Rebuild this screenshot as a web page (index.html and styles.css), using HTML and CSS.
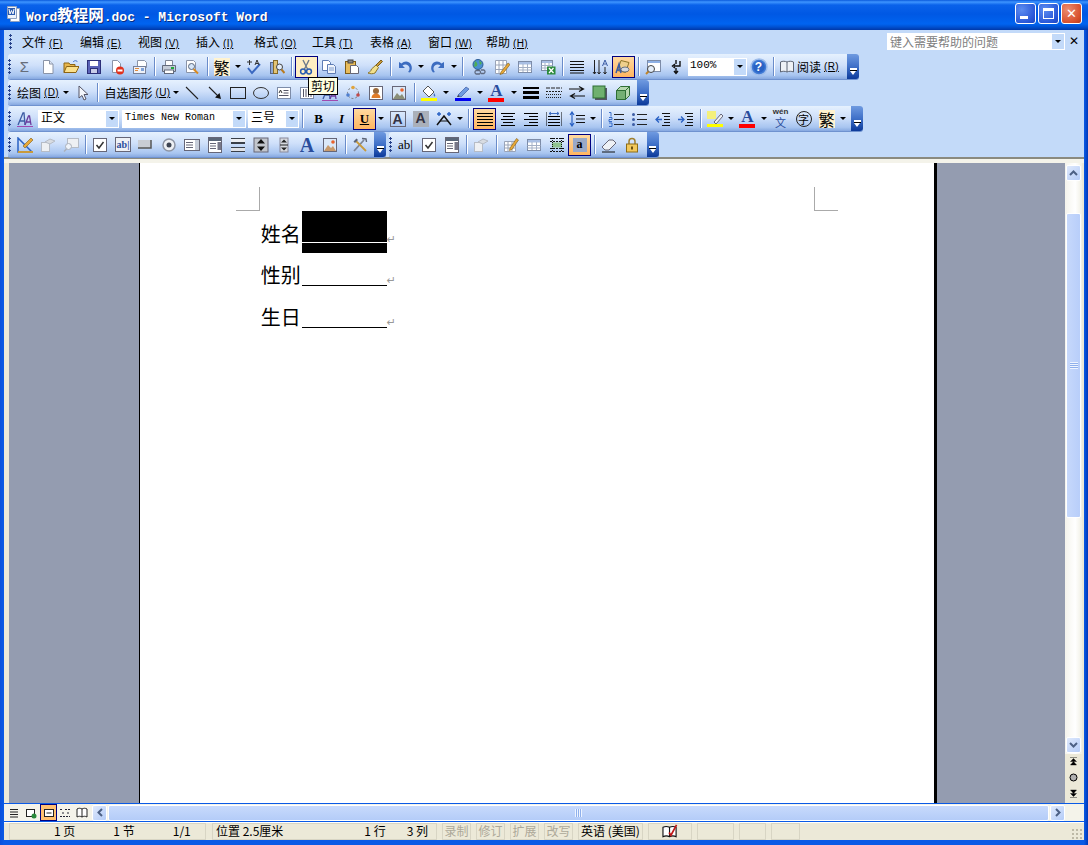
FILE: index.html
```html
<!DOCTYPE html>
<html lang="zh-CN">
<head>
  <meta charset="UTF-8" />
  <title>Word教程网.doc - Microsoft Word</title>
  <link rel="stylesheet" href="styles.css">
</head>
<body>

<svg class="defs" aria-hidden="true">
  <symbol id="new" viewBox="0 0 16 16"><path d="M3.5 1.500h6l3.500 3.500v9.500h-9.500z" fill="#fff" stroke="#8a94a8"/><path d="M9.500 1.500v3.500h3.500" fill="#dde6f5" stroke="#8a94a8"/></symbol>
  <symbol id="open" viewBox="0 0 16 16"><path d="M1 4h5l1 1.500h5v8H1z" fill="#e8b64c" stroke="#8c6414"/><path d="M3.500 7.500H16l-3 6H1z" fill="#fbe08c" stroke="#8c6414"/><path d="M10 3c2-2 3.500-1.500 4.500 0" fill="none" stroke="#3a6ec8"/></symbol>
  <symbol id="save" viewBox="0 0 16 16"><rect x="1.500" y="1.500" width="13" height="13" fill="#5a62b8" stroke="#2c2f78"/><rect x="4" y="2" width="8" height="5" fill="#fff"/><rect x="4.500" y="9.500" width="7" height="5" fill="#c9cde8" stroke="#2c2f78"/></symbol>
  <symbol id="perm" viewBox="0 0 16 16"><path d="M3.500 1.500h5l3 3v9h-8z" fill="#fff" stroke="#8a94a8"/><circle cx="11" cy="11.500" r="4" fill="#e0301c"/><rect x="8.500" y="10.500" width="5" height="2" fill="#fff"/></symbol>
  <symbol id="mail" viewBox="0 0 16 16"><path d="M5.500 1.500h7l2 2v5h-9z" fill="#fff" stroke="#8a94a8"/><rect x="1.500" y="7.500" width="12" height="7" fill="#eef1f8" stroke="#77819a"/><path d="M3 9.500h4M3 11.500h3" stroke="#e08a3c"/><rect x="9" y="9" width="3" height="3" fill="#7fa2d8"/></symbol>
  <symbol id="print" viewBox="0 0 16 16"><path d="M4.500 1.500h7v5h-7z" fill="#fff" stroke="#7d8596"/><path d="M1.500 6.500h13v6h-13z" fill="#c6cdd9" stroke="#626a7c"/><rect x="3.500" y="11" width="9" height="3.500" fill="#fff" stroke="#626a7c"/><rect x="10" y="8" width="3" height="2" fill="#1fa83c"/></symbol>
  <symbol id="preview" viewBox="0 0 16 16"><path d="M2.500 1.500h7l2 2v10h-9z" fill="#fff" stroke="#8a94a8"/><circle cx="7.500" cy="7.500" r="3" fill="#d6e6f8" stroke="#5a667c"/><path d="M9.500 10l4.500 4.500" stroke="#d98a20" stroke-width="2"/></symbol>
  <symbol id="spell" viewBox="0 0 16 16"><path d="M2 9l4 5 8-9" fill="none" stroke="#3a68c0" stroke-width="2"/><path d="M1 3h5M3.500 1v5M9 6l2-5 2 5M10 4.500h2" fill="none" stroke="#333"/></symbol>
  <symbol id="research" viewBox="0 0 16 16"><rect x="1.500" y="3.500" width="3" height="11" fill="#8fa8d4" stroke="#56668c"/><rect x="4.500" y="1.500" width="4" height="13" fill="#e3c474" stroke="#846a28"/><circle cx="10.500" cy="8" r="3" fill="#e4eefa" stroke="#444"/><path d="M12.500 10.500l3 3.500" stroke="#b87a20" stroke-width="2"/></symbol>
  <symbol id="cut" viewBox="0 0 16 16"><path d="M5 1l4.500 9M11 1L6.500 10" stroke="#6d7a8c" stroke-width="1.400"/><circle cx="5" cy="12.500" r="2.400" fill="none" stroke="#2a5cb0" stroke-width="1.500"/><circle cx="11" cy="12.500" r="2.400" fill="none" stroke="#2a5cb0" stroke-width="1.500"/></symbol>
  <symbol id="copy" viewBox="0 0 16 16"><path d="M1.500 1.500h6l2 2v8h-8z" fill="#fff" stroke="#5e7cb4"/><path d="M6.500 5.500h6l2 2v7h-8z" fill="#eef3fb" stroke="#5e7cb4"/><path d="M8 9h5M8 11h5" stroke="#7f9ccc"/></symbol>
  <symbol id="paste" viewBox="0 0 16 16"><rect x="1.500" y="2.500" width="10" height="12" fill="#e8bc5c" stroke="#7c5c18"/><rect x="4" y="1" width="5" height="3" fill="#888" stroke="#444"/><path d="M6.500 6.500h6l2 2v6h-8z" fill="#fff" stroke="#667"/></symbol>
  <symbol id="brush" viewBox="0 0 16 16"><path d="M9 6l5-5 1.500 1.500-5 5z" fill="#c89a3c" stroke="#7c5c18"/><path d="M9 6l2.500 2.500L8 14c-2 1-5 1-7 0 2-1 3-2 3.500-4z" fill="#f2e08c" stroke="#8c7428"/></symbol>
  <symbol id="undo" viewBox="0 0 16 16"><path d="M2 3v6h6L5.500 6.500C8 4.500 12 5.500 12.500 9c.2 1.500-.5 3-1.500 4l2 .5c2-2 2.500-5 1-8C11.500 1.500 7 2 4.500 4.500z" fill="#3c6cc0"/></symbol>
  <symbol id="redo" viewBox="0 0 16 16"><path d="M14 3v6H8l2.500-2.500C8 4.500 4 5.500 3.500 9c-.2 1.500.5 3 1.500 4l-2 .5c-2-2-2.500-5-1-8C4.500 1.500 9 2 11.500 4.500z" fill="#3c6cc0"/></symbol>
  <symbol id="link" viewBox="0 0 16 16"><circle cx="7" cy="5.500" r="5" fill="#4a90d0" stroke="#2c5c94"/><path d="M4 2c2 1 3 3 2 5l-3 1M8 1l3 3-2 2" fill="#4fae54"/><path d="M5 11.500h3.500a2 2 0 0 1 0 3.500H5a2 2 0 0 1 0-3.500zM10 11h3a2 2 0 0 1 0 3.500h-3" fill="none" stroke="#5f6a80" stroke-width="1.300"/></symbol>
  <symbol id="tblpen" viewBox="0 0 16 16"><path d="M1.500 1.500h11v13h-11zM1.500 6h11M1.500 10.500h11M5 1.500v13M9 1.500v13" fill="#fff" stroke="#9aa4b8"/><path d="M7 13l7-9 2 1.500-7 9-3 1z" fill="#e8a838" stroke="#7c5c18" stroke-width=".6"/></symbol>
  <symbol id="table" viewBox="0 0 16 16"><rect x="1.500" y="2.500" width="13" height="11" fill="#fff" stroke="#7d8ca8"/><rect x="2" y="3" width="12" height="2.500" fill="#a9bfe4"/><path d="M1.500 8.500h13M1.500 11h13M6 5v8M10.500 5v8" stroke="#a5b1c6"/></symbol>
  <symbol id="excel" viewBox="0 0 16 16"><rect x="1.500" y="1.500" width="11" height="10" fill="#fff" stroke="#7d8ca8"/><rect x="2" y="2" width="10" height="2" fill="#a9bfe4"/><path d="M1.500 6.500h11M1.500 9h11M5 4v7M9 4v7" stroke="#a5b1c6"/><rect x="7" y="7.500" width="8.500" height="8" fill="#2a8a3c"/><path d="M9 9l4.500 5M13.500 9L9 14" stroke="#fff" stroke-width="1.300"/></symbol>
  <symbol id="cols" viewBox="0 0 16 16"><path d="M1 2.500h14M1 5.500h14M1 8.500h14M1 11.500h14M1 14h14" stroke="#111" stroke-width="1.200"/></symbol>
  <symbol id="draw" viewBox="0 0 16 16"><path d="M2.500 1v14M1 13l1.500 2L4 13M7 1v14M5.500 13L7 15l1.500-2M13 8v7M11.500 13l1.500 2 1.500-2" fill="none" stroke="#222"/><path d="M10.500 7l2.500-6 2.500 6M11.500 5h3" fill="none" stroke="#3c5ca4"/></symbol>
  <symbol id="docmap" viewBox="0 0 16 16"><path d="M6 1.500l8 2-3.500 10-8-2z" fill="#eecf8c" stroke="#8c7428"/><path d="M1 14l3-9 2 9M2.500 11h3" fill="none" stroke="#3c5ca4" stroke-width="1.500"/><ellipse cx="10" cy="10.500" rx="4" ry="2.500" fill="#d5d9e0" stroke="#6b7280"/></symbol>
  <symbol id="zoomdoc" viewBox="0 0 16 16"><rect x="2.500" y="1.500" width="13" height="11" fill="#fff" stroke="#7d8ca8"/><rect x="3" y="2" width="12" height="2" fill="#8eb0e4"/><circle cx="6" cy="10" r="3.500" fill="#e4eefa" stroke="#444"/><path d="M3.500 12.500L1 15" stroke="#c08428" stroke-width="2"/></symbol>
  <symbol id="pilcrow" viewBox="0 0 16 16"><path d="M12 2v5H6M7 5L4.500 7 7 9M8 9v5M6 12l2 2.500 2-2.500M8 1v4" fill="none" stroke="#111" stroke-width="1.400"/></symbol>
  <symbol id="help" viewBox="0 0 18 18"><circle cx="9" cy="9" r="8" fill="#3f7ad6" stroke="#9fbdea" stroke-width="1.500"/><circle cx="9" cy="9" r="5.800" fill="#2a62c4"/></symbol>
  <symbol id="book" viewBox="0 0 16 16"><path d="M1.500 3c2-1 4.500-1 6.500 0 2-1 4.500-1 6.500 0v10c-2-1-4.500-1-6.500 0-2-1-4.500-1-6.500 0zM8 3v10" fill="#eef1f6" stroke="#5c6474"/></symbol>
  <symbol id="pointer" viewBox="0 0 16 16"><path d="M4 1v12l3-2.500 2 4.500 2-1-2-4.500h4z" fill="#f4f7fc" stroke="#556"/></symbol>
  <symbol id="line" viewBox="0 0 16 16"><path d="M2 2l12 12" stroke="#222" stroke-width="1.100"/></symbol>
  <symbol id="arrow" viewBox="0 0 16 16"><path d="M2 2l9 9" stroke="#222" stroke-width="1.100"/><path d="M14 14l-6-1.500L12.500 8z" fill="#111"/></symbol>
  <symbol id="rect" viewBox="0 0 16 16"><rect x=".5" y="2.500" width="15" height="11" fill="none" stroke="#222"/></symbol>
  <symbol id="oval" viewBox="0 0 16 16"><ellipse cx="8" cy="8" rx="7.500" ry="5.500" fill="none" stroke="#333"/></symbol>
  <symbol id="textbox" viewBox="0 0 16 16"><rect x="1.500" y="2.500" width="13" height="11" fill="#fff" stroke="#7d8ca8"/><path d="M7.500 5.500h5M7.500 8h5M3 10.500h9.500" stroke="#556"/><path d="M3 8l1.500-3L6 8" fill="none" stroke="#333"/></symbol>
  <symbol id="vtext" viewBox="0 0 16 16"><rect x="1.500" y="2.500" width="13" height="11" fill="#fff" stroke="#7d8ca8"/><path d="M4.500 4v8M7 4v8M9.500 4v8M12 4v8" stroke="#556"/></symbol>
  <symbol id="diagram" viewBox="0 0 16 16"><circle cx="8" cy="8" r="5.500" fill="none" stroke="#777" stroke-dasharray="2 2"/><circle cx="8" cy="2.500" r="1.800" fill="#e0a43c"/><circle cx="13" cy="10" r="1.800" fill="#c04a4a"/><circle cx="3" cy="10" r="1.800" fill="#4f7fd0"/></symbol>
  <symbol id="clipart" viewBox="0 0 16 16"><rect x="1.500" y="1.500" width="13" height="13" fill="#fff" stroke="#667"/><circle cx="8" cy="6" r="3" fill="#9a6a3c"/><path d="M3.500 13c0-3 2-4.500 4.500-4.500s4.500 1.500 4.500 4.500z" fill="#e07c28"/></symbol>
  <symbol id="pic" viewBox="0 0 16 16"><rect x="1.500" y="1.500" width="13" height="13" fill="#dbe8f8" stroke="#667"/><circle cx="11" cy="5" r="1.800" fill="#e8622c"/><path d="M2 14l4-6 3 3 2-2 3 5z" fill="#8a8f78"/></symbol>
  <symbol id="fill" viewBox="0 0 16 16"><path d="M7 1l6 6-5 5-6-6z" fill="#fff" stroke="#555"/><path d="M13 8c1.500 2 1.500 3 .8 3.500-.8.400-1.500-1-.8-3.500" fill="#3c6cc0"/><rect y="13" width="16" height="3" fill="#ffff00"/></symbol>
  <symbol id="pen" viewBox="0 0 16 16"><path d="M3 10l8-8 3 2-8 8z" fill="#6f9ae0" stroke="#3c5ca4" stroke-width=".7"/><path d="M3 10l-1 2 3-.2z" fill="#333"/><rect y="13" width="16" height="3" fill="#0000f0"/></symbol>
  <symbol id="lstyle" viewBox="0 0 16 16"><rect y="2" width="16" height="2" fill="#000"/><rect y="6" width="16" height="3" fill="#000"/><rect y="11" width="16" height="3" fill="#000"/></symbol>
  <symbol id="dash" viewBox="0 0 16 16"><path d="M0 3h16" stroke="#222" stroke-dasharray="4 1"/><path d="M0 6.500h16" stroke="#222" stroke-dasharray="2 1"/><path d="M0 9.500h16M0 12.500h16" stroke="#222" stroke-dasharray="1 1"/></symbol>
  <symbol id="arrows" viewBox="0 0 16 16"><path d="M0 4h14M10 1.500L14.500 4 10 6.500M16 11H2M6 8.500L1.500 11 6 13.500" fill="none" stroke="#111" stroke-width="1.200"/></symbol>
  <symbol id="shadow" viewBox="0 0 16 16"><rect x="3" y="3" width="12" height="12" fill="#556"/><rect x="1" y="1" width="12" height="12" fill="#6fb06f" stroke="#2e6e34"/></symbol>
  <symbol id="cube" viewBox="0 0 16 16"><path d="M1.500 5.500h9v9h-9z" fill="#74b074" stroke="#2e6e34"/><path d="M1.500 5.500l4-4h9l-4 4zM10.500 5.500l4-4v9l-4 4z" fill="#b6d8b0" stroke="#2e6e34"/></symbol>
  <symbol id="styles" viewBox="0 0 16 16"><path d="M1 14L6 2h1l1 12M3 10h5" fill="none" stroke="#3c5ca4" stroke-width="1.300"/><path d="M8 14l3.500-9h1l1.500 9M9.500 11H14" fill="none" stroke="#6a3c9c" stroke-width="1.300"/><path d="M0 15.500h16" stroke="#a04ab0"/></symbol>
  <symbol id="phon" viewBox="0 0 16 16"><path d="M1 14L8 5l7 9" fill="none" stroke="#111" stroke-width="1.500"/><path d="M4 10h8" stroke="#111"/><path d="M3 1v4M1 3h4M13 1v4M11 3h4" stroke="#2a62c4" stroke-width="1.400"/></symbol>
  <symbol id="just" viewBox="0 0 16 16"><path d="M0 2.500h16M0 5.500h16M0 8.500h16M0 11.500h16M0 14.500h16" stroke="#000"/></symbol>
  <symbol id="center" viewBox="0 0 16 16"><path d="M1 2.500h14M3 5.500h10M1 8.500h14M3 11.500h10M1 14.500h14" stroke="#000"/></symbol>
  <symbol id="right" viewBox="0 0 16 16"><path d="M1 2.500h14M6 5.500h9M1 8.500h14M6 11.500h9M1 14.500h14" stroke="#000"/></symbol>
  <symbol id="dist" viewBox="0 0 16 16"><path d="M0 1v14M16 1v14M2 5.500h12M2 8.500h12M2 11.500h12M2 14.500h12" stroke="#000"/><path d="M3 2.500h10M3 2.500l2-1.500M3 2.500L5 4M13 2.500L11 1M13 2.500L11 4" fill="none" stroke="#3c6cc0"/></symbol>
  <symbol id="spacing" viewBox="0 0 16 16"><path d="M3 2v12M1 4l2-3 2 3M1 12l2 3 2-3" fill="none" stroke="#2a62c4" stroke-width="1.200"/><path d="M7 4.500h9M7 8h9M7 11.500h9" stroke="#111"/></symbol>
  <symbol id="nums" viewBox="0 0 16 16"><path d="M6 3.500h10M6 8.500h10M6 13.500h10" stroke="#222"/><path d="M1 1.500h2v4M1 6.500h3v2H1v2h3M1 12h3v3.500H1" fill="none" stroke="#2a62c4" stroke-width=".9"/></symbol>
  <symbol id="bullets" viewBox="0 0 16 16"><path d="M6 3.500h10M6 8.500h10M6 13.500h10" stroke="#222"/><circle cx="2.500" cy="3.500" r="1.500" fill="#3c5ca4"/><circle cx="2.500" cy="8.500" r="1.500" fill="#3c5ca4"/><circle cx="2.500" cy="13.500" r="1.500" fill="#3c5ca4"/></symbol>
  <symbol id="outdent" viewBox="0 0 16 16"><path d="M8 2.500h8M10 5.500h6M10 8.500h6M10 11.500h6M8 14.500h8" stroke="#111"/><path d="M8 8.500H2M5 5.500l-3 3 3 3" fill="none" stroke="#2a62c4" stroke-width="1.300"/></symbol>
  <symbol id="indent" viewBox="0 0 16 16"><path d="M8 2.500h8M10 5.500h6M10 8.500h6M10 11.500h6M8 14.500h8" stroke="#111"/><path d="M1 8.500h6M4 5.500l3 3-3 3" fill="none" stroke="#2a62c4" stroke-width="1.300"/></symbol>
  <symbol id="hilite" viewBox="0 0 16 16"><rect width="9" height="8" fill="#f4f07c"/><path d="M7 11l7-8 2 2-7 8z" fill="#eef1f6" stroke="#667"/><rect y="13" width="16" height="3" fill="#ffff00"/></symbol>
  <symbol id="design" viewBox="0 0 16 16"><path d="M1 1v14h14z" fill="none" stroke="#2a62c4" stroke-width="1.500"/><path d="M6 9l8-8 2 2-8 8z" fill="#e8a838" stroke="#7c5c18" stroke-width=".6"/><path d="M1 15h15" stroke="#c89a3c" stroke-width="2"/></symbol>
  <symbol id="dprops" viewBox="0 0 16 16"><rect x="1.500" y="5.500" width="8" height="9" fill="#eef0f3" stroke="#b6bcc6"/><path d="M5 5l5-3 5 2-5 3z" fill="#d8dce2" stroke="#b6bcc6"/></symbol>
  <symbol id="dview" viewBox="0 0 16 16"><rect x="4.500" y="1.500" width="11" height="9" fill="#eef0f3" stroke="#b6bcc6"/><circle cx="5.500" cy="9.500" r="3" fill="#eef3fa" stroke="#aab0ba"/><path d="M3.500 12L1 14.500" stroke="#aab0ba" stroke-width="1.500"/></symbol>
  <symbol id="check" viewBox="0 0 16 16"><rect x="1.500" y="1.500" width="13" height="13" fill="#fff" stroke="#667"/><path d="M4.500 8l2.500 3 4.500-6" fill="none" stroke="#333" stroke-width="1.500"/></symbol>
  <symbol id="btnf" viewBox="0 0 16 16"><rect y="3" width="13" height="8" fill="#c8ccd4"/><path d="M0 11h13V3" fill="none" stroke="#555" stroke-width="1.500"/></symbol>
  <symbol id="radio" viewBox="0 0 16 16"><circle cx="8" cy="8" r="6" fill="#eef0f4" stroke="#8d94a3" stroke-width="1.500"/><circle cx="8" cy="8" r="2.500" fill="#3d4452"/></symbol>
  <symbol id="listf" viewBox="0 0 16 16"><rect x=".5" y="2.500" width="15" height="11" fill="#fff" stroke="#667"/><path d="M2 5.500h7M2 8h7M2 10.500h7" stroke="#667"/><rect x="11" y="3" width="4" height="10" fill="#c6cdd9"/></symbol>
  <symbol id="combof" viewBox="0 0 16 16"><rect x="1.500" y=".5" width="13" height="15" fill="#fff" stroke="#667"/><rect x="2" y="1" width="12" height="3" fill="#5a6678"/><path d="M3 6.500h6M3 9h6M3 11.500h6" stroke="#667"/><rect x="10.500" y="5" width="3.500" height="8" fill="#778"/></symbol>
  <symbol id="frame" viewBox="0 0 16 16"><rect x="1" y="1" width="14" height="6" fill="#3a3f48"/><rect x="1" y="2" width="14" height="3" fill="#eceef2"/><rect x="1" y="10" width="14" height="5" fill="#3a3f48"/><rect x="1" y="11" width="14" height="3" fill="#dfe2e8"/></symbol>
  <symbol id="spin" viewBox="0 0 16 16"><rect x="1" y="1" width="14" height="14" fill="#c2c6cd" stroke="#667"/><path d="M8 2l4 4.500H4zM8 14l4-4.500H4z" fill="#111"/></symbol>
  <symbol id="scrf" viewBox="0 0 16 16"><rect x="4" y="1" width="8" height="14" fill="#d6d9df" stroke="#889"/><path d="M8 2.500l3 3H5zM8 13.500l3-3H5z" fill="#222"/><path d="M4 8h8" stroke="#222"/></symbol>
  <symbol id="imgf" viewBox="0 0 16 16"><rect x="1.500" y="1.500" width="13" height="13" fill="#dbe8f8" stroke="#667"/><circle cx="11" cy="5" r="1.800" fill="#e8622c"/><path d="M2 14l4-6 3 3 2-2 3 5z" fill="#c89a6c"/></symbol>
  <symbol id="tools" viewBox="0 0 16 16"><path d="M2 14L12 3" stroke="#7d8596" stroke-width="1.800"/><path d="M10 1.500l4 .5.500 3" fill="none" stroke="#5d6576" stroke-width="1.400"/><path d="M14 14L4 4" stroke="#c89a3c" stroke-width="1.800"/><path d="M1.500 4.500l3-3 1.500 1.500-3 3z" fill="#5d6576"/></symbol>
  <symbol id="form" viewBox="0 0 16 16"><path d="M1.500 4.500h11v10h-11zM1.500 8h11M1.500 11h11M5 4.500v10M9 4.500v10" fill="#fff" stroke="#9aa4b8"/><path d="M7 11l6.500-9.500 2 1.500-6.500 9.500-2.500 1z" fill="#e8a838" stroke="#7c5c18" stroke-width=".6"/></symbol>
  <symbol id="tgrid" viewBox="0 0 16 16"><path d="M1 1.500h14M1 14.500h14M1 4.500h14M1 11.500h14" stroke="#111" stroke-dasharray="2 1"/><rect x="3" y="5.500" width="10" height="5" fill="#8fc28f"/><path d="M3.500 1v14M12.500 1v14" stroke="#111" stroke-dasharray="1 1"/></symbol>
  <symbol id="shade" viewBox="0 0 16 16"><rect x="1" y="1" width="14" height="14" fill="#9aa9c8"/></symbol>
  <symbol id="eraser" viewBox="0 0 16 16"><path d="M1 10l7-7h4l3 3-7 7H4z" fill="#eef1f6" stroke="#667"/><path d="M1 15h13" stroke="#111"/></symbol>
  <symbol id="lock" viewBox="0 0 16 16"><path d="M5 7V4.500a3 3 0 0 1 6 0V7" fill="none" stroke="#a08030" stroke-width="1.500"/><rect x="2.500" y="7" width="11" height="8" fill="#f2c85c" stroke="#8c6c18"/><rect x="7" y="9.500" width="2" height="3" fill="#6c5010"/></symbol>
  <symbol id="wdoc" viewBox="0 0 16 16"><path d="M4.500 2.500h9v13h-9z" fill="#fff" stroke="#8fa1c0"/><path d="M1.500.5h9v12h-9z" fill="#eef3fb" stroke="#8fa1c0"/><rect x="2" y="2" width="7" height="7" fill="#2c5cb0"/><path d="M3 3l1 5 1.500-3.500L7 8l1-5" fill="none" stroke="#fff"/></symbol>
  <symbol id="spellbk" viewBox="0 0 18 16"><path d="M1.500 3.500c2-1 5-1 7 0 2-1 5-1 7 0v10c-2-1-5-1-7 0-2-1-5-1-7 0zM8.500 3.500v10" fill="#fff" stroke="#111" stroke-width="1.200"/><path d="M8 9l2 3 6-11" fill="none" stroke="#c01818" stroke-width="1.800"/></symbol>
</svg>

<div class="win">
  <header class="titlebar">
    <svg class="ic doc-ic"><use href="#wdoc"/></svg>
    <h1 class="title">Word<span class="cjk">教程网</span>.doc - Microsoft Word</h1>
    <div class="ctl"><span class="min-glyph"></span></div>
    <div class="ctl"><span class="max-glyph"></span></div>
    <div class="ctl close">✕</div>
  </header>

  <div class="dock">
    <nav class="menubar">
      <span class="grip"></span>
      <a class="mi">文件<u>(F)</u></a>
      <a class="mi">编辑<u>(E)</u></a>
      <a class="mi">视图<u>(V)</u></a>
      <a class="mi">插入<u>(I)</u></a>
      <a class="mi">格式<u>(O)</u></a>
      <a class="mi">工具<u>(T)</u></a>
      <a class="mi">表格<u>(A)</u></a>
      <a class="mi">窗口<u>(W)</u></a>
      <a class="mi">帮助<u>(H)</u></a>
      <div class="askbox"><span>键入需要帮助的问题</span><i class="combo-drop"><b class="ar"></b></i></div>
      <span class="menu-x">✕</span>
    </nav>

    <div class="row">
      <div class="tb">
        <span class="grip"></span>
        <span class="b sigma">Σ</span>
        <span class="b"><svg class="ic"><use href="#new"/></svg></span>
        <span class="b"><svg class="ic"><use href="#open"/></svg></span>
        <span class="b"><svg class="ic"><use href="#save"/></svg></span>
        <span class="b"><svg class="ic"><use href="#perm"/></svg></span>
        <span class="b"><svg class="ic"><use href="#mail"/></svg></span>
        <span class="s"></span>
        <span class="b"><svg class="ic"><use href="#print"/></svg></span>
        <span class="b"><svg class="ic"><use href="#preview"/></svg></span>
        <span class="s"></span>
        <span class="b"><em class="fan">繁</em></span><span class="a"><b class="ar"></b></span>
        <span class="b"><svg class="ic"><use href="#spell"/></svg></span>
        <span class="b"><svg class="ic"><use href="#research"/></svg></span>
        <span class="s"></span>
        <span class="b hot"><svg class="ic"><use href="#cut"/></svg></span>
        <span class="b"><svg class="ic"><use href="#copy"/></svg></span>
        <span class="b"><svg class="ic"><use href="#paste"/></svg></span>
        <span class="b"><svg class="ic"><use href="#brush"/></svg></span>
        <span class="s"></span>
        <span class="b"><svg class="ic"><use href="#undo"/></svg></span><span class="a a10"><b class="ar"></b></span>
        <span class="b"><svg class="ic"><use href="#redo"/></svg></span><span class="a a10"><b class="ar"></b></span>
        <span class="s s8"></span>
        <span class="b"><svg class="ic"><use href="#link"/></svg></span>
        <span class="b"><svg class="ic"><use href="#tblpen"/></svg></span>
        <span class="b"><svg class="ic"><use href="#table"/></svg></span>
        <span class="b"><svg class="ic"><use href="#excel"/></svg></span>
        <span class="s"></span>
        <span class="b"><svg class="ic"><use href="#cols"/></svg></span>
        <span class="b"><svg class="ic"><use href="#draw"/></svg></span>
        <span class="b hot on"><svg class="ic"><use href="#docmap"/></svg></span>
        <span class="s"></span>
        <span class="b"><svg class="ic"><use href="#zoomdoc"/></svg></span>
        <span class="b"><svg class="ic"><use href="#pilcrow"/></svg></span>
        <span class="combo zoom"><span class="mono">100%</span><i class="combo-drop"><b class="ar"></b></i></span>
        <span class="b"><svg class="ic help-ic"><use href="#help"/></svg><em class="help-q">?</em></span>
        <span class="s s6"></span>
        <span class="b read"><svg class="ic"><use href="#book"/></svg>阅读<u>(R)</u></span>
        <span class="end"><i></i></span>
      </div>
    </div>

    <div class="row">
      <div class="tb">
        <span class="grip"></span>
        <span class="b txt w48">绘图<u>(D)</u></span><span class="a a10"><b class="ar"></b></span>
        <span class="b"><svg class="ic"><use href="#pointer"/></svg></span>
        <span class="s"></span>
        <span class="b txt w70">自选图形<u>(U)</u></span><span class="a a10"><b class="ar"></b></span>
        <span class="b"><svg class="ic"><use href="#line"/></svg></span>
        <span class="b"><svg class="ic"><use href="#arrow"/></svg></span>
        <span class="b"><svg class="ic"><use href="#rect"/></svg></span>
        <span class="b"><svg class="ic"><use href="#oval"/></svg></span>
        <span class="b"><svg class="ic"><use href="#textbox"/></svg></span>
        <span class="b"><svg class="ic"><use href="#vtext"/></svg></span>
        <span class="b"><svg class="ic"><use href="#styles"/></svg></span>
        <span class="b"><svg class="ic"><use href="#diagram"/></svg></span>
        <span class="b"><svg class="ic"><use href="#clipart"/></svg></span>
        <span class="b"><svg class="ic"><use href="#pic"/></svg></span>
        <span class="s"></span>
        <span class="b"><svg class="ic"><use href="#fill"/></svg></span><span class="a a11"><b class="ar"></b></span>
        <span class="b"><svg class="ic"><use href="#pen"/></svg></span><span class="a a11"><b class="ar"></b></span>
        <span class="b colour-a"><em class="big-a">A</em><i class="red-bar"></i></span><span class="a a11"><b class="ar"></b></span>
        <span class="b"><svg class="ic"><use href="#lstyle"/></svg></span>
        <span class="b"><svg class="ic"><use href="#dash"/></svg></span>
        <span class="b"><svg class="ic"><use href="#arrows"/></svg></span>
        <span class="b"><svg class="ic"><use href="#shadow"/></svg></span>
        <span class="b"><svg class="ic"><use href="#cube"/></svg></span>
        <span class="end"><i></i></span>
      </div>
    </div>

    <div class="row">
      <div class="tb">
        <span class="grip"></span>
        <span class="b"><svg class="ic"><use href="#styles"/></svg></span>
        <span class="combo style"><span>正文</span><i class="combo-drop"><b class="ar"></b></i></span>
        <span class="combo font"><span class="mono small">Times New Roman</span><i class="combo-drop"><b class="ar"></b></i></span>
        <span class="combo size"><span>三号</span><i class="combo-drop"><b class="ar"></b></i></span>
        <span class="s s8"></span>
        <span class="b fmt bold">B</span>
        <span class="b fmt ital">I</span>
        <span class="b fmt under hot on">U</span><span class="a a10"><b class="ar"></b></span>
        <span class="b"><em class="box-a">A</em></span>
        <span class="b"><em class="box-a shaded">A</em></span>
        <span class="b"><svg class="ic"><use href="#phon"/></svg></span><span class="a a10"><b class="ar"></b></span>
        <span class="s s8"></span>
        <span class="b hot on"><svg class="ic"><use href="#just"/></svg></span>
        <span class="b"><svg class="ic"><use href="#center"/></svg></span>
        <span class="b"><svg class="ic"><use href="#right"/></svg></span>
        <span class="b"><svg class="ic"><use href="#dist"/></svg></span>
        <span class="b"><svg class="ic"><use href="#spacing"/></svg></span><span class="a a10"><b class="ar"></b></span>
        <span class="s"></span>
        <span class="b"><svg class="ic"><use href="#nums"/></svg></span>
        <span class="b"><svg class="ic"><use href="#bullets"/></svg></span>
        <span class="b"><svg class="ic"><use href="#outdent"/></svg></span>
        <span class="b"><svg class="ic"><use href="#indent"/></svg></span>
        <span class="s"></span>
        <span class="b"><svg class="ic"><use href="#hilite"/></svg></span><span class="a a10"><b class="ar"></b></span>
        <span class="b colour-a"><em class="big-a">A</em><i class="red-bar"></i></span><span class="a a10"><b class="ar"></b></span>
        <span class="b wen"><small>wén</small><em>文</em></span>
        <span class="b"><em class="zi">字</em></span>
        <span class="b"><em class="fan">繁</em></span><span class="a a10"><b class="ar"></b></span>
        <span class="end"><i></i></span>
      </div>
    </div>

    <div class="row">
      <div class="tb">
        <span class="grip"></span>
        <span class="b"><svg class="ic"><use href="#design"/></svg></span>
        <span class="b"><svg class="ic"><use href="#dprops"/></svg></span>
        <span class="b"><svg class="ic"><use href="#dview"/></svg></span>
        <span class="s"></span>
        <span class="b"><svg class="ic"><use href="#check"/></svg></span>
        <span class="b"><em class="abf">ab|</em></span>
        <span class="b"><svg class="ic"><use href="#btnf"/></svg></span>
        <span class="b"><svg class="ic"><use href="#radio"/></svg></span>
        <span class="b"><svg class="ic"><use href="#listf"/></svg></span>
        <span class="b"><svg class="ic"><use href="#combof"/></svg></span>
        <span class="b"><svg class="ic"><use href="#frame"/></svg></span>
        <span class="b"><svg class="ic"><use href="#spin"/></svg></span>
        <span class="b"><svg class="ic"><use href="#scrf"/></svg></span>
        <span class="b"><em class="big-a plain">A</em></span>
        <span class="b"><svg class="ic"><use href="#imgf"/></svg></span>
        <span class="s"></span>
        <span class="b"><svg class="ic"><use href="#tools"/></svg></span>
        <span class="end"><i></i></span>
      </div>
      <div class="tb second">
        <span class="grip"></span>
        <span class="b"><em class="abl">ab|</em></span>
        <span class="b"><svg class="ic"><use href="#check"/></svg></span>
        <span class="b"><svg class="ic"><use href="#combof"/></svg></span>
        <span class="s"></span>
        <span class="b"><svg class="ic"><use href="#dprops"/></svg></span>
        <span class="s"></span>
        <span class="b"><svg class="ic"><use href="#form"/></svg></span>
        <span class="b"><svg class="ic"><use href="#table"/></svg></span>
        <span class="b"><svg class="ic"><use href="#tgrid"/></svg></span>
        <span class="b hot on shade-a"><svg class="ic"><use href="#shade"/></svg><em>a</em></span>
        <span class="s"></span>
        <span class="b"><svg class="ic"><use href="#eraser"/></svg></span>
        <span class="b"><svg class="ic"><use href="#lock"/></svg></span>
        <span class="end"><i></i></span>
      </div>
    </div>

    <div class="tooltip">剪切</div>
  </div>

  <div class="topline"></div>

  <main class="workspace">
    <div class="gutter left"></div>
    <article class="page">
      <div class="crops"><i class="crop tl"></i><i class="crop tr"></i></div>
      <p class="line first">姓名<span class="blank sel"></span><i class="ret">↵</i></p>
      <p class="line second-l">性别<span class="blank"></span><i class="ret">↵</i></p>
      <p class="line third">生日<span class="blank"></span><i class="ret">↵</i></p>
    </article>
    <div class="gutter right"></div>
    <aside class="vscroll">
      <i class="sb-btn"><svg viewBox="0 0 9 6"><path d="M1 5l3.500-3.500L8 5" fill="none" stroke="#4d6185" stroke-width="2"/></svg></i>
      <div class="vtrack"><div class="vthumb"><i class="thumb-lines"></i></div></div>
      <i class="sb-btn"><svg viewBox="0 0 9 6"><path d="M1 1l3.500 3.500L8 1" fill="none" stroke="#4d6185" stroke-width="2"/></svg></i>
      <div class="browse">
        <svg viewBox="0 0 9 9"><path d="M1 .5h7M4.500 1.500L7.500 4.500h-6zM4.500 4.500L7.500 8h-6z" fill="#000" stroke="#000" stroke-width=".4"/></svg>
        <svg viewBox="0 0 9 9"><circle cx="4.500" cy="4.500" r="3.500" fill="#b0b0b0" stroke="#000"/></svg>
        <svg viewBox="0 0 9 9"><path d="M1 8.500h7M4.500 7.500L7.500 4.500h-6zM4.500 4.500L7.500 1h-6z" fill="#000" stroke="#000" stroke-width=".4"/></svg>
      </div>
    </aside>
  </main>

  <div class="hscroll">
    <div class="views">
      <svg class="vw" viewBox="0 0 12 12"><path d="M2 2.500h8M2 5h8M2 7.500h8M2 10h8" stroke="#222"/></svg>
      <svg class="vw" viewBox="0 0 12 12"><rect x="1.500" y="2.500" width="8" height="7" fill="#fff" stroke="#222"/><circle cx="9" cy="9" r="2.500" fill="#2a8a3c"/></svg>
      <span class="vw-on"><svg class="vw" viewBox="0 0 12 12"><rect x="1.500" y="2.500" width="9" height="7" fill="#fff" stroke="#222"/><path d="M3.500 6h5" stroke="#222"/></svg></span>
      <svg class="vw" viewBox="0 0 12 12"><path d="M1 2.500h3M6 2.500h5M3 6h3M8 6h3M1 9.500h10" stroke="#223" stroke-dasharray="2 1"/></svg>
      <svg class="vw" viewBox="0 0 12 12"><path d="M1 2c2-1 3-1 5 0 2-1 3-1 5 0v8c-2-1-3-1-5 0-2-1-3-1-5 0zM6 2v8" fill="#fff" stroke="#222"/></svg>
    </div>
    <i class="sb-btn side"><svg viewBox="0 0 6 9"><path d="M5 1L1.500 4.500 5 8" fill="none" stroke="#4d6185" stroke-width="2"/></svg></i>
    <div class="hthumb"><i class="thumb-lines horiz"></i></div>
    <i class="sb-btn side"><svg viewBox="0 0 6 9"><path d="M1 1l3.500 3.500L1 8" fill="none" stroke="#4d6185" stroke-width="2"/></svg></i>
  </div>

  <footer class="status">
    <div class="panel p1"><span>1 页</span><span>1 节</span><span>1/1</span></div>
    <div class="panel p2"><span>位置 2.5厘米</span><span>1 行</span><span>3 列</span></div>
    <div class="panel dim">录制</div>
    <div class="panel dim">修订</div>
    <div class="panel dim">扩展</div>
    <div class="panel dim">改写</div>
    <div class="panel lang">英语 (美国)</div>
    <div class="panel bookp"><svg class="ic bk"><use href="#spellbk"/></svg></div>
    <div class="panel e1"></div>
    <div class="panel e2"></div>
    <div class="panel e3"></div>
    <div class="sizegrip"></div>
  </footer>
</div>

</body>
</html>
```

FILE: styles.css
```css
* {
  box-sizing: border-box;
}
html, body {
  margin: 0;
  height: 100%;
}
body {
  font-family: "Noto Sans CJK SC", "Liberation Sans", sans-serif;
  font-size: 12px;
  color: #000;
  background: #0a4fd8;
  overflow: hidden;
}
em, i {
  font-style: normal;
}
.defs {
  display: none;
}
.win {
  position: relative;
  width: 1088px;
  height: 845px;
  display: flex;
  flex-direction: column;
  padding: 0 4px 5px;
  background: linear-gradient(90deg, #0a50dc 0, #0a5ae6 4px, #0a5ae6 1084px, #0038b8 100%);
}
.win > * {
  flex: none;
}
.ic {
  width: 16px;
  height: 16px;
  display: block;
}

/* title bar */
.titlebar {
  height: 30px;
  margin: 0 -4px;
  padding: 0 6px 0 6px;
  display: flex;
  align-items: center;
  background: linear-gradient(180deg, #0a5adc 0, #3e95ff 2px, #0a62ea 5px, #0058e4 14px, #0064f0 24px, #0050d0 27px, #0038a8 30px);
}
.doc-ic {
  margin-top: -3px;
}
.title {
  flex: 1;
  margin: -2px 0 0 4px;
  font: bold 13px "Liberation Mono", monospace;
  color: #fff;
  text-shadow: 1px 1px 0 #0a2c80;
}
.title .cjk {
  font-family: "Noto Sans CJK SC", sans-serif;
  font-size: 15.500px;
}
.ctl {
  width: 21px;
  height: 21px;
  margin: -3px 0 0 2px;
  border: 1px solid #fff;
  border-radius: 3px;
  background: radial-gradient(circle at 30% 30%, #5c8cf0, #2a58d8 70%, #1c44c0);
  display: flex;
  align-items: center;
  justify-content: center;
  position: relative;
}
.min-glyph {
  width: 8px;
  height: 3px;
  background: #fff;
  margin-top: 8px;
  margin-right: 4px;
}
.max-glyph {
  width: 11px;
  height: 11px;
  border: 1px solid #fff;
  border-top-width: 3px;
}
.close {
  background: radial-gradient(circle at 30% 30%, #ec8c70, #d8502c 70%, #b83c1c);
  color: #fff;
  font-size: 13px;
  font-weight: bold;
  font-family: "DejaVu Sans", sans-serif;
}

/* menu + toolbars */
.dock {
  position: relative;
  height: 127px;
  background: #c3daf9;
}
.menubar {
  height: 24px;
  display: flex;
  align-items: center;
  padding-left: 5px;
  padding-bottom: 1px;
}
.grip {
  flex: none;
  width: 5px;
  height: 15px;
  background: radial-gradient(circle at 1.500px 1.500px, #27418a 1.100px, transparent 1.300px) 0 0 / 5px 4px repeat-y;
}
.menubar .grip {
  margin-right: 8px;
}
.mi {
  width: 58px;
  flex: none;
  white-space: nowrap;
}
u {
  font-size: 10px;
  margin-left: 3px;
  letter-spacing: .3px;
  font-family: "Liberation Sans", sans-serif;
}
.askbox {
  position: absolute;
  left: 883px;
  top: 3px;
  width: 178px;
  height: 17px;
  background: #fff;
  border: 1px solid #fff;
  color: #808080;
  padding-left: 2px;
  display: flex;
  justify-content: space-between;
  line-height: 15px;
}
.menu-x {
  position: absolute;
  left: 1065px;
  top: 4px;
  font: bold 12px "DejaVu Sans", sans-serif;
}
.row {
  display: flex;
  height: 26px;
  padding-left: 4px;
}
.tb {
  height: 25px;
  display: flex;
  align-items: center;
  border-radius: 3px;
  background: linear-gradient(180deg, #e6f1fe 0, #cfe0fa 45%, #a8c5f0 85%, #86a8e0 100%);
  box-shadow: 0 1px 0 #6f92cf;
}
.second {
  margin-left: 3px;
}
.b {
  position: relative;
  flex: none;
  width: 23px;
  height: 22px;
  display: flex;
  align-items: center;
  justify-content: center;
}
.hot {
  border: 1px solid #000080;
  background: #ffeec2;
}
.on {
  background: linear-gradient(180deg, #ffd9a0, #ffb560);
}
.s {
  flex: none;
  width: 6.500px;
  height: 19px;
  background: linear-gradient(90deg, transparent 3px, #6a8cca 3px, #6a8cca 4px, #fff 4px, #fff 5px, transparent 5px);
}
.s6 { width: 6px; }
.s8 { width: 8px; }
.a {
  flex: none;
  width: 9px;
  height: 22px;
  display: flex;
  align-items: center;
  justify-content: center;
}
.a10 { width: 10px; }
.a11 { width: 11px; }
.ar {
  display: block;
  width: 0;
  height: 0;
  border: 3px solid transparent;
  border-top: 3px solid #000;
  border-bottom: 0;
}
.end {
  flex: none;
  width: 12px;
  height: 25px;
  margin-left: 3px;
  border-radius: 0 3px 3px 0;
  background: linear-gradient(180deg, #6f9ae0 0, #3f70c8 50%, #0c3a9a 100%);
  display: flex;
  align-items: flex-end;
  justify-content: center;
  padding-bottom: 4px;
}
.end i {
  position: relative;
  display: block;
  width: 0;
  height: 0;
  border: 3.500px solid transparent;
  border-top: 4px solid #fff;
  border-bottom: 0;
}
.end i::before {
  content: "";
  position: absolute;
  left: -3.500px;
  top: -7px;
  width: 7px;
  height: 2px;
  background: #fff;
  border-bottom: 1px solid #000;
}
.sigma {
  font: 15px "Liberation Sans", sans-serif;
  color: #666d7a;
}
.fan {
  background: #fff3d0;
  font-size: 16px;
  line-height: 18px;
  width: 16px;
  height: 18px;
  text-align: center;
  display: block;
}
.help-ic {
  width: 18px;
  height: 18px;
}
.help-q {
  position: absolute;
  color: #fff;
  font: bold 12px "Liberation Sans", sans-serif;
}
.read {
  width: 68px;
  justify-content: flex-start;
  padding-left: 3px;
  gap: 2px;
  white-space: nowrap;
}
.read u {
  margin-left: 1px;
}
.txt {
  justify-content: flex-start;
  padding-left: 4px;
  white-space: nowrap;
}
.w48 { width: 48px; }
.w70 { width: 70px; }
.combo {
  flex: none;
  height: 18px;
  background: #fff;
  border: 1px solid #fff;
  margin-left: 2px;
  padding-left: 2px;
  display: flex;
  align-items: center;
  justify-content: space-between;
  white-space: nowrap;
  line-height: 14px;
}
.combo > span {
  margin-top: -3px;
}
.combo-drop {
  width: 12px;
  height: 100%;
  flex: none;
  background: #c3daf9;
  display: flex;
  align-items: center;
  justify-content: center;
}
.mono {
  font: 11px "Liberation Mono", monospace;
}
.mono.small {
  font-size: 10px;
}
.zoom {
  width: 59px;
  margin: 0 0 0 1px;
  padding-left: 1px;
}
.style { width: 81px; }
.font { width: 124px; margin-left: 3px; }
.size { width: 51px; }
.fmt {
  font: bold 13px "Liberation Serif", serif;
}
.ital {
  font-style: italic;
}
.under {
  text-decoration: underline;
}
.big-a {
  font: bold 17px "Liberation Serif", serif;
  color: #2a4c9c;
  line-height: 16px;
  margin-top: -4px;
}
.big-a.plain {
  font-size: 20px;
  margin-top: 0;
}
.red-bar {
  position: absolute;
  left: 3px;
  right: 4px;
  bottom: 2px;
  height: 4px;
  background: #f00;
}
.box-a {
  width: 16px;
  height: 16px;
  border: 1px solid #667;
  font: bold 14px/15px "Liberation Sans", sans-serif;
  text-align: center;
  color: #334;
}
.box-a.shaded {
  background: #aab0ba;
  border: 0;
}
.wen {
  flex-direction: column;
  color: #2a4c9c;
}
.wen small {
  font: bold 8px/8px "Liberation Sans", sans-serif;
  color: #333;
}
.wen em {
  font-size: 11px;
  line-height: 13px;
}
.zi {
  width: 16px;
  height: 16px;
  border: 1px solid #222;
  border-radius: 50%;
  font-size: 11px;
  line-height: 14px;
  text-align: center;
}
.abf {
  width: 16px;
  height: 15px;
  border: 1px solid #667;
  background: #eef1f6;
  font: bold 10px/13px "Liberation Serif", serif;
  text-align: center;
  color: #2a4c9c;
  overflow: hidden;
}
.abl {
  font: 13px "Liberation Serif", serif;
}
.shade-a em {
  position: absolute;
  font: bold 12px "Liberation Serif", serif;
}
.tooltip {
  position: absolute;
  left: 304px;
  top: 47px;
  width: 30px;
  height: 18px;
  background: #ffffe1;
  border: 1px solid #000;
  text-align: center;
  line-height: 15px;
  z-index: 5;
}

/* document */
.topline {
  height: 6px;
  background: linear-gradient(180deg, #8a8a80 0, #8a8a80 2px, #f4f3ea 2px);
}
.workspace {
  height: 640px;
  display: flex;
  background: #ece9d8;
  padding: 0 2px 0 5px;
}
.gutter {
  background: #949cb0;
}
.gutter.left {
  width: 131px;
  border-right: 1px solid #000;
}
.gutter.right {
  width: 128px;
}
.page {
  width: 798px;
  background: #fff;
  border-right: 3px solid #000;
  padding: 24px 96px 0;
  overflow: hidden;
}
.crops {
  display: flex;
  justify-content: space-between;
}
.crop {
  width: 24px;
  height: 24px;
  border-bottom: 1px solid #aaa;
}
.crop.tl {
  border-right: 1px solid #aaa;
}
.crop.tr {
  border-left: 1px solid #aaa;
}
.line {
  margin: 0;
  padding-left: 25px;
  display: flex;
  align-items: flex-end;
  font-size: 20px;
  line-height: 28px;
  height: 42px;
}
.first {
  padding-bottom: 5px;
}
.second-l {
  padding-bottom: 6px;
}
.third {
  padding-bottom: 6px;
}
.blank {
  width: 85px;
  height: 22px;
  margin-left: 1px;
  border-bottom: 1px solid #000;
  margin-bottom: 3px;
}
.sel {
  height: 42px;
  margin-bottom: -5px;
  border: 0;
  background: linear-gradient(180deg, #000 0, #000 31px, #fff 31px, #fff 32px, #000 32px);
}
.ret {
  font: 11px "DejaVu Sans", sans-serif;
  color: #999;
  line-height: 14px;
  margin-bottom: 1px;
}

/* scrollbars */
.vscroll {
  width: 17px;
  display: flex;
  flex-direction: column;
  align-items: center;
  background: linear-gradient(90deg, #f4f3ec, #fff 60%, #f0efe4);
}
.sb-btn {
  flex: none;
  width: 15px;
  height: 16px;
  margin-top: 2px;
  border: 1px solid #fff;
  border-radius: 2px;
  background: linear-gradient(135deg, #dfe9fc, #b4ccf8);
  display: flex;
  align-items: center;
  justify-content: center;
}
.sb-btn svg {
  width: 9px;
  height: 6px;
}
.vtrack {
  flex: none;
  width: 100%;
  height: 554px;
  display: flex;
  justify-content: center;
  padding-top: 32px;
}
.vthumb {
  width: 15px;
  height: 305px;
  border: 1px solid #fff;
  border-radius: 2px;
  background: linear-gradient(90deg, #c6d8fb, #b8cefa);
  display: flex;
  align-items: center;
  justify-content: center;
}
.thumb-lines {
  width: 8px;
  height: 7px;
  background: repeating-linear-gradient(180deg, #eef4ff 0, #eef4ff 1px, #8fb0ec 1px, #8fb0ec 2px);
}
.thumb-lines.horiz {
  width: 7px;
  height: 8px;
  background: repeating-linear-gradient(90deg, #eef4ff 0, #eef4ff 1px, #8fb0ec 1px, #8fb0ec 2px);
}
.browse {
  flex: 1;
  width: 100%;
  background: #ece9d8;
  margin-top: 1px;
  padding-top: 3px;
  display: flex;
  flex-direction: column;
  align-items: center;
  gap: 7px;
}
.browse svg {
  width: 9px;
  height: 9px;
  flex: none;
}
.hscroll {
  height: 17px;
  margin-top: 1px;
  padding-left: 4px;
  display: flex;
  align-items: center;
  background: #f4f3ea;
}
.views {
  flex: none;
  width: 84px;
  display: flex;
  align-items: center;
  gap: 5px;
}
.vw {
  width: 12px;
  height: 12px;
  flex: none;
}
.vw-on {
  width: 17px;
  height: 17px;
  margin: 0 -3px 0 -2px;
  background: #ffc070;
  border: 1px solid #000080;
  display: flex;
  align-items: center;
  justify-content: center;
}
.sb-btn.side {
  width: 15px;
  height: 16px;
  margin: 0;
}
.sb-btn.side svg {
  width: 6px;
  height: 9px;
}
.hthumb {
  width: 941px;
  height: 16px;
  margin: 0 1px;
  border: 1px solid #fff;
  border-radius: 2px;
  background: linear-gradient(180deg, #c8dafc, #b4ccf8);
  display: flex;
  align-items: center;
  justify-content: center;
}

/* status bar */
.status {
  position: relative;
  height: 18px;
  margin-top: 1px;
  padding-left: 5px;
  display: flex;
  gap: 5px;
  background: #ece9d8;
  border-top: 1px solid #fff;
}
.panel {
  flex: none;
  height: 17px;
  border: 1px solid #d8d5c4;
  line-height: 14px;
  text-align: center;
  white-space: nowrap;
}
.p1 {
  width: 197px;
  padding-left: 44px;
  display: flex;
  gap: 38px;
}
.p2 {
  width: 225px;
  padding-left: 3px;
  margin-left: 1px;
  display: flex;
}
.p2 span:nth-child(2) {
  margin-left: 81px;
}
.p2 span:nth-child(3) {
  margin-left: 21px;
}
.dim {
  width: 29px;
  color: #aca899;
}
.lang {
  width: 65px;
}
.bookp {
  width: 44px;
  display: flex;
  justify-content: center;
}
.bk {
  width: 18px;
  height: 15px;
}
.e1 { width: 37px; }
.e2 { width: 27px; }
.e3 { width: 29px; }
.sizegrip {
  position: absolute;
  right: 1px;
  bottom: 0;
  width: 12px;
  height: 12px;
  background: radial-gradient(circle, #bdb9a6 1px, transparent 1.300px) 0 0 / 4px 4px;
}
```
